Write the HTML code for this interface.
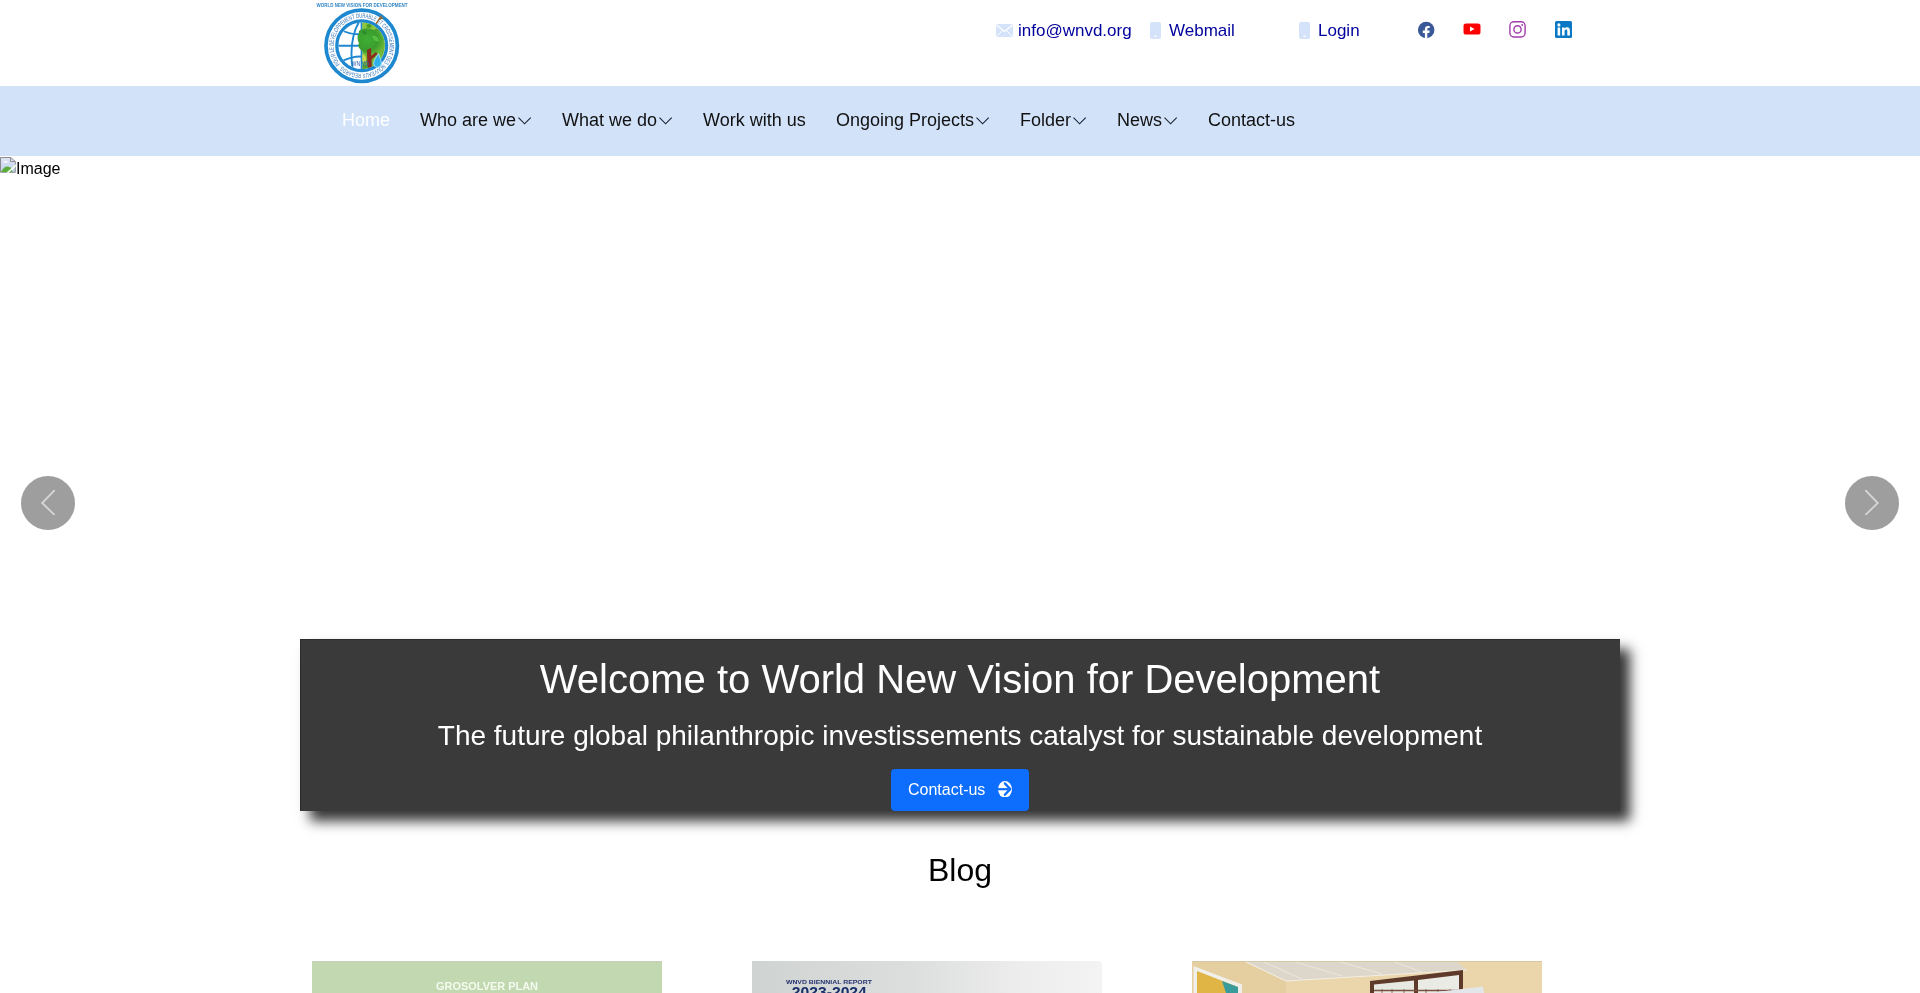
<!DOCTYPE html>
<html lang="en">
<head>
<meta charset="utf-8">
<title>World New Vision for Development</title>
<style>
html,body{margin:0;padding:0;background:#fff;}
body{width:1920px;height:993px;overflow:hidden;position:relative;will-change:transform;font-family:"Liberation Sans",sans-serif;color:#212529;}
.abs{position:absolute;}
.t{position:absolute;white-space:nowrap;line-height:1;}
/* top bar */
.top a{color:#00009c;text-decoration:none;font-size:17px;}
/* nav */
.nav{position:absolute;left:0;top:86px;width:1920px;height:70px;background:#d2e2f9;}
.nav .i{position:absolute;top:0;height:70px;line-height:70px;font-size:18px;color:#111;white-space:nowrap;}
.nav .i svg{position:absolute;}
/* caption */
.cap{position:absolute;left:300px;top:639px;width:1320px;height:172px;background:#3a3a3a;box-shadow:10px 10px 12px #363636, inset 1px 1px 0 #2c2c2c;}
.cap h1{position:absolute;left:0;width:100%;top:0;margin:0;text-align:center;font-weight:normal;color:#fff;font-size:40px;}
.cap p{position:absolute;left:0;width:100%;margin:0;text-align:center;color:#fff;font-size:28px;}
.btn{position:absolute;left:891px;top:769px;width:138px;height:42px;background:#0d6efd;border-radius:4px;color:#fff;font-size:16px;}
.arrow{position:absolute;width:54px;height:54px;border-radius:50%;background:#9e9e9e;top:476px;}
.card{position:absolute;top:961px;width:350px;height:40px;}
</style>
</head>
<body>

<!-- logo -->
<svg class="abs" style="left:312px;top:0" width="100" height="86" viewBox="0 0 100 86">
  <defs>
    <clipPath id="gl"><circle cx="49.7" cy="45.8" r="23.2"/></clipPath>
    <radialGradient id="tg" cx="0.35" cy="0.45" r="0.75"><stop offset="0" stop-color="#3fae35"/><stop offset="0.55" stop-color="#3a9d2e"/><stop offset="1" stop-color="#7cbf3a"/></radialGradient>
    <path id="arc" d="M28.25 63.80 A28.0 28.0 0 1 1 71.15 27.80 A28.0 28.0 0 1 1 28.25 63.80"/>
  </defs>
  <text x="50" y="7.1" text-anchor="middle" font-family="Liberation Sans" font-weight="bold" font-size="5.2" fill="#3286c8" textLength="91" lengthAdjust="spacingAndGlyphs">WORLD NEW VISION FOR DEVELOPMENT</text>
  <circle cx="49.7" cy="45.8" r="35.7" fill="#fff" stroke="#1d88d0" stroke-width="3.7"/>
  <text font-family="Liberation Sans" font-size="6.4" fill="#3474b8"><textPath href="#arc" textLength="172.0" lengthAdjust="spacingAndGlyphs">POUR LE DEVELOPPEMENT DURABLE ET CROISSEMENT DES NOUVEAUX REGARDS</textPath></text>
  <circle cx="49.7" cy="45.8" r="24.9" fill="#fff" stroke="#1d88d0" stroke-width="3.3"/>
  <g clip-path="url(#gl)">
    <g stroke="#1d88d0" stroke-width="1.9" fill="none">
      <line x1="20" y1="45.8" x2="50" y2="45.8"/>
      <line x1="49.6" y1="18" x2="49.6" y2="74"/>
      <path d="M28 29.5 Q40 35.5 50 34"/>
      <path d="M28 62 Q40 56 50 56.5"/>
      <path d="M47.5 21 Q36 40 41 72"/>
    </g>
    <rect x="50.5" y="18" width="30" height="56" fill="#6fb83a"/>
    <path d="M50.5 20 L62 20 Q70 24 73 34 L50.5 36 Z" fill="#8cc63f"/>
    <ellipse cx="57" cy="26" rx="2.6" ry="2" fill="#4a9a2a"/>
    <ellipse cx="65" cy="31" rx="2.8" ry="2.2" fill="#4a9a2a"/>
    <path d="M47 33 Q46 30 51 29 Q56 27 62 30 Q70 30 72 38 Q74 46 70 52 Q64 55 58 53 Q52 54 49 50 Q45 47 47 43 Q44 38 47 33 Z" fill="url(#tg)"/>
    <path d="M50 31 Q54 30 55 34 Q51 36 50 31 Z" fill="#2f8a2a"/>
    <path d="M60 36 Q66 35 67 41 Q62 43 60 36 Z" fill="#55c040"/>
    <path d="M55 50 L59 48 L60 71 L55.5 72 Z" fill="#8c2a22"/>
    <path d="M58 57 L64 52 L65.5 54 L59 60 Z" fill="#8c2a22"/>
    <path d="M50.5 54 Q55 55 54 62 L50.5 62 Z" fill="#c9d84a"/>
    <path d="M62 58 Q66 57 66 62 Q62 64 62 58 Z" fill="#7dc23e"/>
    <path d="M50.5 66 Q54 63 57 68 L56 72 L50.5 72 Z" fill="#4f9f2f"/>
  </g>
  <path d="M66.5 53.5 Q62 60 61.5 63 Q61.5 67 65.5 67.5 Q69.5 67 69.5 63 Q69 60 66.5 53.5 Z" fill="#2fb0ea" stroke="#c6eeff" stroke-width="0.7"/>
  <text x="48.2" y="66" text-anchor="middle" font-family="Liberation Sans" font-size="7.6" fill="#2b5fae" textLength="17.5" lengthAdjust="spacingAndGlyphs">WN VD</text>
  <path d="M64 24 L69.5 15.5 M67 19 L71 18" stroke="#9a6a3a" stroke-width="1.4" fill="none"/>
</svg>

<!-- top links -->
<div class="top">
  <svg class="abs" style="left:996px;top:24px" width="17" height="13" viewBox="0 0 17 13"><rect x="0" y="0" width="17" height="13" rx="1.5" fill="#d5e3fa"/><path d="M0.5 1 L8.5 7.5 L16.5 1" stroke="#fff" stroke-width="1.2" fill="none"/><path d="M0.5 12.5 L6.5 6.5 M16.5 12.5 L10.5 6.5" stroke="#fff" stroke-width="1" fill="none"/></svg>
  <a class="t" style="left:1018px;top:22px">info@wnvd.org</a>
  <svg class="abs" style="left:1150px;top:22px" width="11" height="17" viewBox="0 0 11 17"><rect x="0" y="0" width="11" height="17" rx="2" fill="#d5e3fa"/><rect x="4.5" y="13.5" width="2" height="1.5" fill="#fff"/></svg>
  <a class="t" style="left:1169px;top:22px">Webmail</a>
  <svg class="abs" style="left:1299px;top:22px" width="11" height="17" viewBox="0 0 11 17"><rect x="0" y="0" width="11" height="17" rx="2" fill="#d5e3fa"/><rect x="4.5" y="13.5" width="2" height="1.5" fill="#fff"/></svg>
  <a class="t" style="left:1318px;top:22px">Login</a>
</div>

<!-- social -->
<svg class="abs" style="left:1417px;top:21px" width="18" height="18" viewBox="0 0 18 18"><circle cx="9.2" cy="9.0" r="8.25" fill="#3b5998"/><path d="M10.3 17.6 V11.9 H12.3 L12.6 9.6 H10.3 V8.2 C10.3 7.5 10.6 7.0 11.5 7.0 H12.7 V5.1 C12.4 5.05 11.7 5 10.9 5 C9.1 5 7.9 6.1 7.9 8.1 V9.6 H5.8 V11.9 H7.9 V17.6 Z" fill="#fff"/></svg>
<svg class="abs" style="left:1463px;top:23px" width="18" height="12" viewBox="0 0 18 12"><rect x="0.5" y="0.5" width="17" height="11.1" rx="2.6" fill="#f00"/><path d="M7 3.4 L11.6 6 L7 8.6 Z" fill="#fff"/></svg>
<svg class="abs" style="left:1509px;top:21px" width="18" height="18" viewBox="0 0 18 18"><rect x="0.9" y="0.7" width="15.2" height="15.3" rx="4" fill="none" stroke="#a23cac" stroke-width="1.4"/><circle cx="8.5" cy="8.4" r="3.6" fill="none" stroke="#a23cac" stroke-width="1.4"/><circle cx="13.2" cy="4" r="0.9" fill="#a23cac"/></svg>
<svg class="abs" style="left:1555px;top:21px" width="17" height="17" viewBox="0 0 17 17"><rect x="0" y="0" width="17" height="17" rx="1.5" fill="#0b78c6"/><rect x="2.6" y="6.5" width="2.6" height="8" fill="#fff"/><circle cx="3.9" cy="3.9" r="1.55" fill="#fff"/><path d="M7 6.5 H9.5 V7.7 C10 6.9 10.9 6.3 12.2 6.3 C14.2 6.3 14.9 7.6 14.9 9.7 V14.5 H12.3 V10.3 C12.3 9.3 12.1 8.6 11.1 8.6 C10.1 8.6 9.6 9.3 9.6 10.4 V14.5 H7 Z" fill="#fff"/></svg>

<!-- nav -->
<div class="nav">
  <div class="i" style="left:342px;top:-1px;color:#fff">Home</div>
  <div class="i" style="left:420px;top:-1px">Who are we</div>
  <div class="i" style="left:562px;top:-1px">What we do</div>
  <div class="i" style="left:703px;top:-1px">Work with us</div>
  <div class="i" style="left:836px;top:-1px">Ongoing Projects</div>
  <div class="i" style="left:1020px;top:-1px">Folder</div>
  <div class="i" style="left:1117px;top:-1px">News</div>
  <div class="i" style="left:1208px;top:-1px">Contact-us</div>
  <svg style="position:absolute;top:31px;left:518px" width="14" height="8" viewBox="0 0 14 8"><path d="M0.5 0.6 L6.6 6.8 L12.7 0.6" stroke="#1a2030" stroke-width="1.1" fill="none"/></svg>
  <svg style="position:absolute;top:31px;left:659px" width="14" height="8" viewBox="0 0 14 8"><path d="M0.5 0.6 L6.6 6.8 L12.7 0.6" stroke="#1a2030" stroke-width="1.1" fill="none"/></svg>
  <svg style="position:absolute;top:31px;left:976px" width="14" height="8" viewBox="0 0 14 8"><path d="M0.5 0.6 L6.6 6.8 L12.7 0.6" stroke="#1a2030" stroke-width="1.1" fill="none"/></svg>
  <svg style="position:absolute;top:31px;left:1073px" width="14" height="8" viewBox="0 0 14 8"><path d="M0.5 0.6 L6.6 6.8 L12.7 0.6" stroke="#1a2030" stroke-width="1.1" fill="none"/></svg>
  <svg style="position:absolute;top:31px;left:1164px" width="14" height="8" viewBox="0 0 14 8"><path d="M0.5 0.6 L6.6 6.8 L12.7 0.6" stroke="#1a2030" stroke-width="1.1" fill="none"/></svg>
</div>

<!-- broken image -->
<svg class="abs" style="left:0;top:157px" width="16" height="16" viewBox="0 0 16 16">
  <defs><linearGradient id="sky" x1="0" y1="0" x2="0" y2="1"><stop offset="0" stop-color="#dfe5f5"/><stop offset="1" stop-color="#c2d2ee"/></linearGradient></defs>
  <path d="M0.5 0.5 H10.8 L15.3 4.6 V15.3 H0.5 Z" fill="url(#sky)" stroke="#8c8c8c" stroke-width="1"/>
  <path d="M10.5 0.5 V4.5 H15.3" fill="none" stroke="#8c8c8c" stroke-width="1"/>
  <path d="M3 5.5 Q5.5 1.8 8 5.5 Z" fill="#fff"/>
  <path d="M1 15 Q5 6.5 11.5 11 L12.5 15 Z" fill="#5cae3c"/>
  <path d="M6.5 16 L15.8 7.6 V9.5 L8.5 16 Z" fill="#fff"/>
  <path d="M6.8 15.8 L15.6 7.8" stroke="#e0ffd8" stroke-width="1"/>
</svg>

<div class="t" style="left:16px;top:161px;font-size:16px;color:#000">Image</div>

<!-- arrows -->
<div class="arrow" style="left:21px"><svg style="position:absolute;left:0;top:0" width="54" height="54" viewBox="0 0 54 54"><path d="M33.2 14.6 L21.2 27 L33 38.4" stroke="#d6d6d6" stroke-width="1.8" stroke-linecap="round" fill="none"/></svg></div>
<div class="arrow" style="left:1845px"><svg style="position:absolute;left:0;top:0" width="54" height="54" viewBox="0 0 54 54"><path d="M20.8 14.6 L32.8 27 L21 38.4" stroke="#d6d6d6" stroke-width="1.8" stroke-linecap="round" fill="none"/></svg></div>

<!-- caption -->
<div class="cap"></div>
<div class="t" style="left:0;width:1920px;text-align:center;top:659px;font-size:40px;color:#fff">Welcome to World New Vision for Development</div>
<div class="t" style="left:0;width:1920px;text-align:center;top:722px;font-size:28px;color:#fff">The future global philanthropic investissements catalyst for sustainable development</div>
<div class="btn"><span class="t" style="left:17px;top:13px">Contact-us</span><svg class="abs" style="left:107px;top:11.7px" width="14" height="16.6" viewBox="0 0 14 16.6"><ellipse cx="7" cy="8.3" rx="7" ry="8.3" fill="#fff"/><path d="M0 8.2 H10.5" stroke="#0d6efd" stroke-width="2.2"/><path d="M6.9 2.4 L12.2 8.1 L6.9 13.8" stroke="#0d6efd" stroke-width="2.3" fill="none" stroke-linecap="round" stroke-linejoin="round"/></svg></div>

<!-- blog -->
<div class="t" style="left:0;width:1920px;text-align:center;top:854px;font-size:32px;color:#000">Blog</div>
<div class="card" style="left:312px;background:#c1d8b1;overflow:hidden">
  <svg style="position:absolute;left:0;top:0" width="350" height="32" viewBox="0 0 350 32"><rect x="0" y="0" width="350" height="1.2" fill="#c8d2b8"/><text x="175" y="29" text-anchor="middle" font-family="Liberation Sans" font-weight="bold" font-size="10" fill="#f4fbef" textLength="102" lengthAdjust="spacingAndGlyphs">GROSOLVER PLAN</text></svg>
</div>
<div class="card" style="left:752px;background:linear-gradient(90deg,#cfd3d2 0%,#dcdedd 45%,#eeeeee 80%,#f3f3f3 100%);border-top-right-radius:4px;overflow:hidden">
  <svg style="position:absolute;left:0;top:0" width="350" height="32" viewBox="0 0 350 32"><text x="76.9" y="23" text-anchor="middle" font-family="Liberation Sans" font-weight="bold" font-size="5.6" fill="#24336e" textLength="86" lengthAdjust="spacingAndGlyphs">WNVD BIENNIAL REPORT</text><text x="77.3" y="35.8" text-anchor="middle" font-family="Liberation Sans" font-weight="bold" font-size="14.5" fill="#1a2f6a" textLength="75" lengthAdjust="spacingAndGlyphs">2023-2024</text></svg>
</div>
<div class="card" style="left:1192px;background:#e6d3a8;overflow:hidden">
  <svg style="position:absolute;left:0;top:0" width="350" height="32" viewBox="0 0 350 32">
    <rect width="350" height="32" fill="#ebd6ab"/>
    <polygon points="0,0 52,0 94,20 94,32 0,32" fill="#e5cfa0"/>
    <polygon points="52,0 264,0 275,9 94,20" fill="#ddd7cb"/>
    <path d="M52 0 L94 20 L275 9" stroke="#f4efe4" stroke-width="1" fill="none"/>
    <path d="M70 0 L110 18 M100 0 L150 15 M145 0 L190 13 M200 0 L230 11" stroke="#f2ede2" stroke-width="0.7" fill="none"/>
    <polygon points="178,20 271,9 271,32 178,32" fill="#5e3a2a"/>
    <polygon points="182,23.5 222,19.5 222,32 182,32" fill="#e8e8e3"/>
    <polygon points="226,19 267,14 267,32 226,32" fill="#ebebe6"/>
    <path d="M182 29.5 H267" stroke="#7a5040" stroke-width="1.3"/>
    <path d="M190 28 V32 M200 28 V32 M212 28 V32 M234 28 V32 M246 28 V32 M258 28 V32" stroke="#7a5040" stroke-width="0.8"/>
    <polygon points="1.5,5 50,23.5 50,32 1.5,32" fill="#f1efea"/>
    <polygon points="5,10 46,26 46,32 5,32" fill="#e0b546"/>
    <polygon points="30,20 46,26 46,32 34,32" fill="#3a9c9a"/>
    <polygon points="236,32 291,25.5 292,32" fill="#e4e7ea"/>
    <rect x="0" y="0" width="350" height="1" fill="#d6c8a6"/>
  </svg>
</div>

</body>
</html>
